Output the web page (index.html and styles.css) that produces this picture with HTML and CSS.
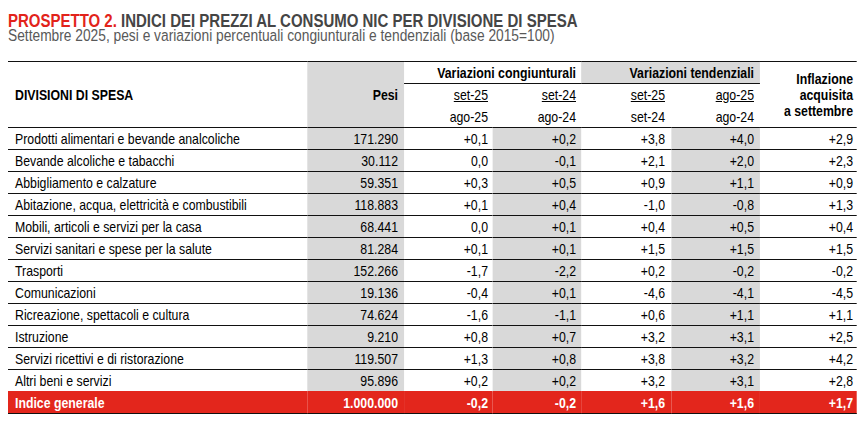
FILE: index.html
```html
<!DOCTYPE html>
<html lang="it">
<head>
<meta charset="utf-8">
<title>Prospetto 2</title>
<link rel="stylesheet" href="styles.css">
</head>
<body>
<div class="page">
<div class="report">
  <h1 class="title"><span class="title-num">PROSPETTO 2.</span> INDICI DEI PREZZI AL CONSUMO NIC PER DIVISIONE DI SPESA</h1>
  <p class="subtitle">Settembre 2025, pesi e variazioni percentuali congiunturali e tendenziali (base 2015=100)</p>
  <table class="grid">
    <colgroup>
      <col class="w-div"><col class="w-pesi"><col class="w-c1"><col class="w-c2"><col class="w-c3"><col class="w-c4"><col class="w-c5">
    </colgroup>
    <thead>
      <tr class="h1">
        <th class="hdiv" rowspan="3">DIVISIONI DI SPESA</th>
        <th class="hpesi gray" rowspan="3">Pesi</th>
        <th class="grp c2p" colspan="2">Variazioni congiunturali</th>
        <th class="grp gray c4p" colspan="2">Variazioni tendenziali</th>
        <th class="hinf" rowspan="3">Inflazione<br>acquisita<br>a settembre</th>
      </tr>
      <tr class="h2">
        <td class="c1p"><u>set-25</u></td>
        <td class="c2p"><u>set-24</u></td>
        <td class="c3p"><u>set-25</u></td>
        <td class="c4p"><u>ago-25</u></td>
      </tr>
      <tr class="h3">
        <td class="c1p">ago-25</td>
        <td class="c2p">ago-24</td>
        <td class="c3p">set-24</td>
        <td class="c4p">ago-24</td>
      </tr>
    </thead>
    <tbody>
      <tr><td class="name">Prodotti alimentari e bevande analcoliche</td><td class="pesi gray">171.290</td><td class="c1p">+0,1</td><td class="c2p gray">+0,2</td><td class="c3p">+3,8</td><td class="c4p gray">+4,0</td><td class="c5p">+2,9</td></tr>
      <tr><td class="name">Bevande alcoliche e tabacchi</td><td class="pesi gray">30.112</td><td class="c1p">0,0</td><td class="c2p gray">-0,1</td><td class="c3p">+2,1</td><td class="c4p gray">+2,0</td><td class="c5p">+2,3</td></tr>
      <tr><td class="name">Abbigliamento e calzature</td><td class="pesi gray">59.351</td><td class="c1p">+0,3</td><td class="c2p gray">+0,5</td><td class="c3p">+0,9</td><td class="c4p gray">+1,1</td><td class="c5p">+0,9</td></tr>
      <tr><td class="name">Abitazione, acqua, elettricità e combustibili</td><td class="pesi gray">118.883</td><td class="c1p">+0,1</td><td class="c2p gray">+0,4</td><td class="c3p">-1,0</td><td class="c4p gray">-0,8</td><td class="c5p">+1,3</td></tr>
      <tr><td class="name">Mobili, articoli e servizi per la casa</td><td class="pesi gray">68.441</td><td class="c1p">0,0</td><td class="c2p gray">+0,1</td><td class="c3p">+0,4</td><td class="c4p gray">+0,5</td><td class="c5p">+0,4</td></tr>
      <tr><td class="name">Servizi sanitari e spese per la salute</td><td class="pesi gray">81.284</td><td class="c1p">+0,1</td><td class="c2p gray">+0,1</td><td class="c3p">+1,5</td><td class="c4p gray">+1,5</td><td class="c5p">+1,5</td></tr>
      <tr><td class="name">Trasporti</td><td class="pesi gray">152.266</td><td class="c1p">-1,7</td><td class="c2p gray">-2,2</td><td class="c3p">+0,2</td><td class="c4p gray">-0,2</td><td class="c5p">-0,2</td></tr>
      <tr><td class="name">Comunicazioni</td><td class="pesi gray">19.136</td><td class="c1p">-0,4</td><td class="c2p gray">+0,1</td><td class="c3p">-4,6</td><td class="c4p gray">-4,1</td><td class="c5p">-4,5</td></tr>
      <tr><td class="name">Ricreazione, spettacoli e cultura</td><td class="pesi gray">74.624</td><td class="c1p">-1,6</td><td class="c2p gray">-1,1</td><td class="c3p">+0,6</td><td class="c4p gray">+1,1</td><td class="c5p">+1,1</td></tr>
      <tr><td class="name">Istruzione</td><td class="pesi gray">9.210</td><td class="c1p">+0,8</td><td class="c2p gray">+0,7</td><td class="c3p">+3,2</td><td class="c4p gray">+3,1</td><td class="c5p">+2,5</td></tr>
      <tr><td class="name">Servizi ricettivi e di ristorazione</td><td class="pesi gray">119.507</td><td class="c1p">+1,3</td><td class="c2p gray">+0,8</td><td class="c3p">+3,8</td><td class="c4p gray">+3,2</td><td class="c5p">+4,2</td></tr>
      <tr class="last"><td class="name">Altri beni e servizi</td><td class="pesi gray">95.896</td><td class="c1p">+0,2</td><td class="c2p gray">+0,2</td><td class="c3p">+3,2</td><td class="c4p gray">+3,1</td><td class="c5p">+2,8</td></tr>
      <tr class="total"><td class="name">Indice generale</td><td class="pesi">1.000.000</td><td class="c1p">-0,2</td><td class="c2p">-0,2</td><td class="c3p">+1,6</td><td class="c4p">+1,6</td><td class="c5p">+1,7</td></tr>
    </tbody>
  </table>
</div>
</div>
</body>
</html>
```
FILE: styles.css
```css
:root {
  --narrow: 0.82;
}
html, body {
  margin: 0;
  padding: 0;
  background: #ffffff;
}
body {
  margin: 8px;
  font-family: "Liberation Sans", Arial, sans-serif;
  color: #000000;
}
.page {
  width: 849px;
  overflow: hidden;
}
/* emulate Arial Narrow: lay out at full width, then condense horizontally */
.report {
  width: calc(849px / var(--narrow));
  transform: scaleX(var(--narrow));
  transform-origin: 0 0;
}
.title {
  margin: 5px 0 0 0;
  font-size: 18.3px;
  line-height: 15px;
  font-weight: bold;
  color: #454545;
  white-space: nowrap;
}
.title-num {
  color: #e2231a;
}
.subtitle {
  margin: 0 0 18px 0;
  font-size: 16.8px;
  line-height: 15px;
  color: #595959;
  white-space: nowrap;
}
.grid {
  width: calc(849px / var(--narrow));
  table-layout: fixed;
  border-collapse: separate;
  border-spacing: 0;
  font-size: 15px;
}
.w-div { width: calc(299px / var(--narrow)); }
.w-pesi { width: calc(97px / var(--narrow)); }
.w-c1 { width: calc(89px / var(--narrow)); }
.w-c2 { width: calc(88px / var(--narrow)); }
.w-c3 { width: calc(90px / var(--narrow)); }
.w-c4 { width: calc(89px / var(--narrow)); }
.w-c5 { width: calc(97px / var(--narrow)); }

.grid th, .grid td {
  padding: 0;
  height: 21px;
  line-height: 21px;
  border-bottom: 1px solid #111111;
  text-align: right;
  white-space: nowrap;
  font-weight: normal;
  vertical-align: middle;
}
.grid .h1 th {
  border-top: 1px solid #111111;
}
.grid th {
  font-weight: bold;
}
.grid .h2 td {
  border-bottom-color: transparent;
}
.gray {
  background: #d9d9d9;
}
.grid .hdiv {
  text-align: left;
  padding-left: calc(7px / var(--narrow));
}
.grid .hpesi {
  padding-right: calc(6px / var(--narrow));
}
.grid .hinf {
  line-height: 16px;
  padding-right: calc(4px / var(--narrow));
  padding-top: 0;
}
.grid .name {
  text-align: left;
  padding-left: calc(7px / var(--narrow));
}
.grid .pesi { padding-right: calc(6px / var(--narrow)); }
.grid .c1p { padding-right: calc(5px / var(--narrow)); }
.grid .c2p { padding-right: calc(5px / var(--narrow)); }
.grid .c3p { padding-right: calc(6px / var(--narrow)); }
.grid .c4p { padding-right: calc(6px / var(--narrow)); }
.grid .c5p { padding-right: calc(4px / var(--narrow)); }

.grid tr.last td {
  border-bottom-color: #e3261c;
}
.grid tr.total td {
  background: #e3261c;
  color: #ffffff;
  font-weight: bold;
  border-bottom-color: #111111;
}
```
